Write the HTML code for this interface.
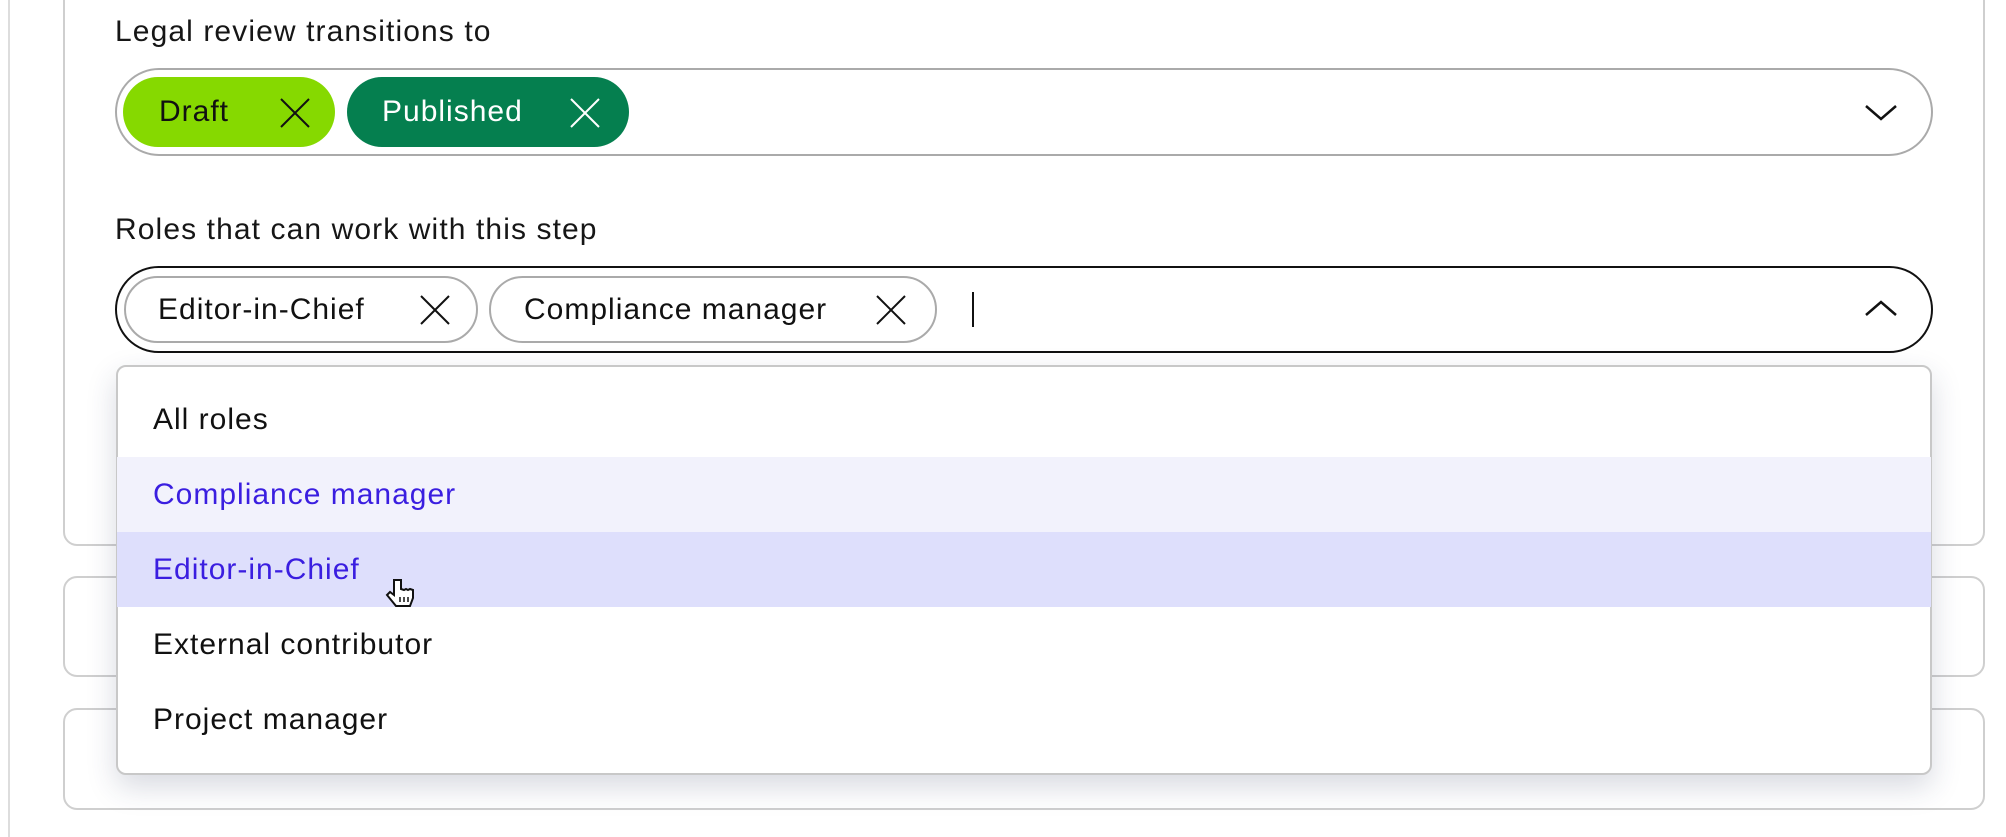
<!DOCTYPE html>
<html><head><style>
*{box-sizing:border-box;margin:0;padding:0}
body{width:2006px;height:837px;background:#fff;position:relative;overflow:hidden;font-family:"Liberation Sans",sans-serif;color:#111}
.a{position:absolute}
.lbl{font-size:30px;letter-spacing:1.1px;color:#161616}
.chip{position:absolute;border-radius:40px;font-size:30px;letter-spacing:1px;display:flex;align-items:center}
.x{position:absolute}
.row{position:absolute;left:117px;width:1814px;height:75px;font-size:30px;letter-spacing:1px;display:flex;align-items:center;padding-left:36px}
</style></head><body>
<div class="a" style="left:8px;top:0;width:2px;height:837px;background:#ddd"></div>
<div class="a" style="left:63px;top:-20px;width:1922px;height:566px;border:2px solid #cfcfcf;border-radius:14px"></div>
<div class="a" style="left:63px;top:576px;width:1922px;height:101px;border:2px solid #cfcfcf;border-radius:14px"></div>
<div class="a" style="left:63px;top:708px;width:1922px;height:102px;border:2px solid #cfcfcf;border-radius:14px"></div>

<div class="a lbl" style="left:115px;top:15px">Legal review transitions to</div>
<div class="a" style="left:115px;top:68px;width:1818px;height:88px;border:2px solid #aaa;border-radius:44px"></div>
<div class="chip" style="left:123px;top:77px;width:212px;height:70px;background:#86d900;color:#111;padding-left:36px">Draft</div>
<svg class="x" style="left:279px;top:97px" width="32" height="32"><path d="M2 2L30 30M30 2L2 30" stroke="#111" stroke-width="2"/></svg>
<div class="chip" style="left:347px;top:77px;width:282px;height:70px;background:#057f4f;color:#fff;padding-left:35px">Published</div>
<svg class="x" style="left:569px;top:97px" width="32" height="32"><path d="M2 2L30 30M30 2L2 30" stroke="#fff" stroke-width="2"/></svg>
<svg class="a" style="left:1864px;top:104px" width="34" height="18"><path d="M2 2L17 15L32 2" fill="none" stroke="#111" stroke-width="2.5"/></svg>

<div class="a lbl" style="left:115px;top:213px">Roles that can work with this step</div>
<div class="a" style="left:115px;top:266px;width:1818px;height:87px;border:2.5px solid #111;border-radius:44px"></div>
<div class="chip" style="left:124px;top:276px;width:354px;height:67px;border:2px solid #aaa;padding-left:32px">Editor-in-Chief</div>
<svg class="x" style="left:419px;top:294px" width="32" height="32"><path d="M2 2L30 30M30 2L2 30" stroke="#111" stroke-width="2"/></svg>
<div class="chip" style="left:489px;top:276px;width:448px;height:67px;border:2px solid #aaa;padding-left:33px">Compliance manager</div>
<svg class="x" style="left:875px;top:294px" width="32" height="32"><path d="M2 2L30 30M30 2L2 30" stroke="#111" stroke-width="2"/></svg>
<div class="a" style="left:972px;top:292px;width:2px;height:35px;background:#111"></div>
<svg class="a" style="left:1864px;top:299px" width="34" height="18"><path d="M2 16L17 3L32 16" fill="none" stroke="#111" stroke-width="2.5"/></svg>

<div class="a" style="left:116px;top:365px;width:1816px;height:410px;border:2px solid #c8c8c8;border-radius:10px;background:#fff;box-shadow:0 12px 30px rgba(40,50,90,0.18);overflow:hidden"></div>
<div class="row" style="top:382px;color:#111">All roles</div>
<div class="row" style="top:457px;background:#f2f2fc;color:#3a1ee0">Compliance manager</div>
<div class="row" style="top:532px;background:#dedffc;color:#3a1ee0">Editor-in-Chief</div>
<div class="row" style="top:607px;color:#111">External contributor</div>
<div class="row" style="top:682px;color:#111">Project manager</div>
<svg class="a" style="left:385px;top:577px" width="32" height="32" viewBox="0 0 32 32"><path d="M9 3v15l-4-3-3 3 9 11h14l3-8v-8l-3-1-2 1-2-1-2 1-3-1V3z" fill="#fff" stroke="#111" stroke-width="2"/><path d="M15 20v5M19 20v5M23 20v5" stroke="#111" stroke-width="1.5"/></svg>
</body></html>
